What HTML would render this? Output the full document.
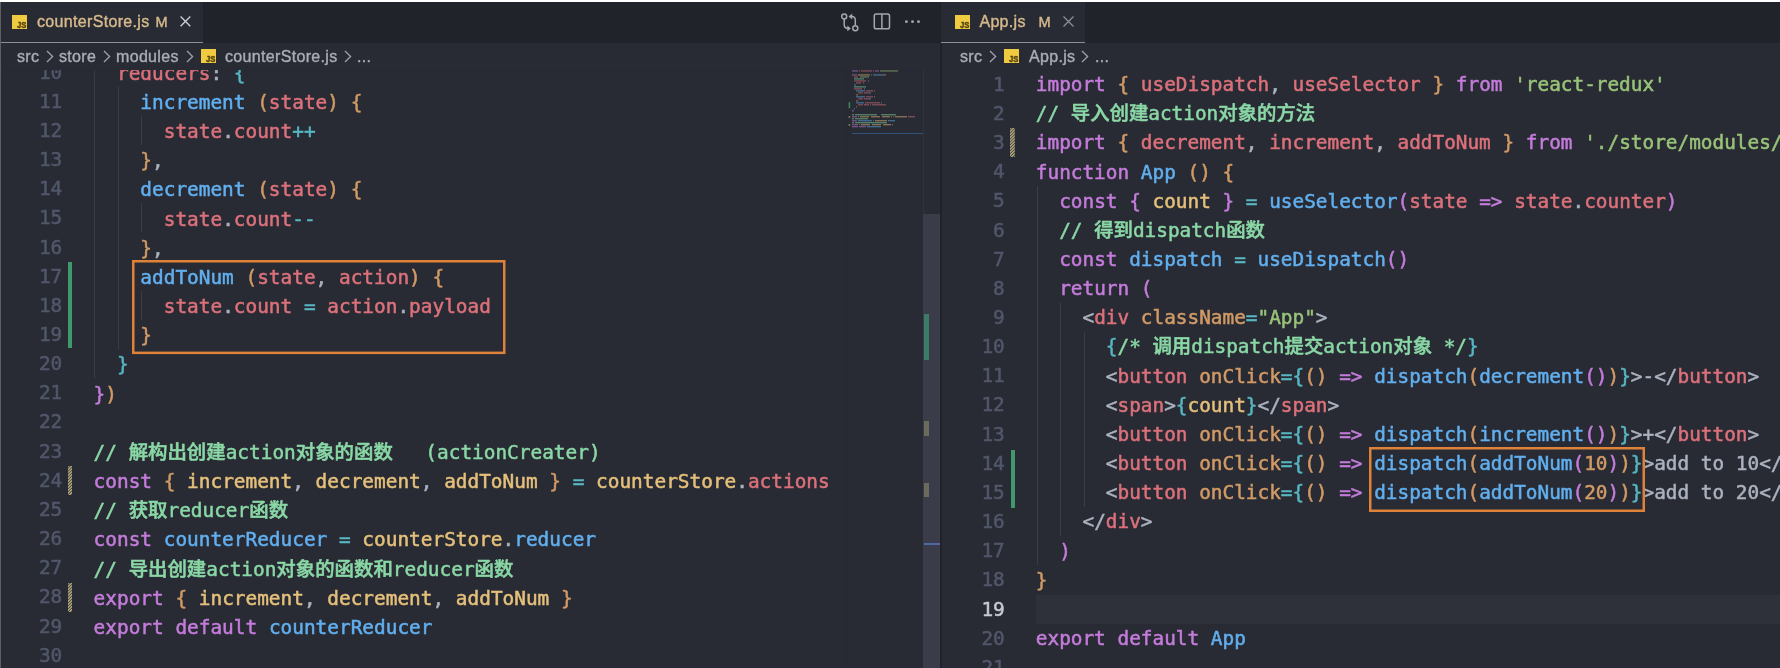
<!DOCTYPE html>
<html lang="zh"><head><meta charset="utf-8"><title>VS Code</title>
<style>
*{box-sizing:border-box}
html,body{margin:0;padding:0}
body{width:1780px;height:668px;overflow:hidden;background:#fff;position:relative;font-family:"Liberation Sans","Noto Sans CJK SC",sans-serif}
#app{position:absolute;left:0;top:2px;width:1780px;height:666px;background:#292b34;overflow:hidden;will-change:transform}
.abs{position:absolute}
.tabbar{position:absolute;top:0;height:41.2px;background:#21232b}
.tab{position:absolute;top:0;height:39.8px;background:#292b34}.tab:after{content:'';position:absolute;left:0;right:0;top:39.5px;height:1.7px;background:#8d8f95}
.ui{position:absolute;white-space:pre;font-size:16px;letter-spacing:.33px;line-height:20px;color:#a9acb5;-webkit-text-stroke:.4px currentColor}
.mod{color:#d7ba8c}
.ln,.cl{position:absolute;height:29.16px;line-height:29.16px;font-family:"DejaVu Sans Mono","Liberation Mono","Noto Sans CJK SC",monospace;font-size:19.4px;white-space:pre;-webkit-text-stroke:.5px currentColor}
.ln{text-align:right;color:#51576a}
.ln.cur{color:#c6c9d1}
.cl{color:#abb2bf;margin-top:1.3px}
#led .cl{font-size:19.41px}
#red .cl{font-size:19.385px;margin-top:.35px}
.k{color:#c47cdb}.f{color:#61afef}.v{color:#dc717b}.y{color:#e5c07b}.o{color:#d19a66}.c{color:#56b6c2}.s{color:#98c379}.g{color:#abb2bf}
.m{color:#8ad8a6;font-weight:500}
.sp{letter-spacing:-.85px}
.gd{position:absolute;width:1px;background:#3a3d48}
.box{position:absolute;overflow:visible}
.mm{position:absolute}
.hatch{position:absolute}
.gbar{position:absolute;width:4px;background:#40996a}
</style></head>
<body><div id="app">
<div class="tabbar" style="left:0;width:940px"></div>
<div class="tab" style="left:1px;width:201.9px"></div>
<svg class="abs" style="left:12px;top:12.8px" width="15" height="14.6" viewBox="0 0 15 14.6"><rect width="15" height="14.6" fill="#f0cb41"/><text x="5" y="13.2" font-family="Liberation Sans, sans-serif" font-weight="bold" font-size="9.2" textLength="9.4" lengthAdjust="spacingAndGlyphs" fill="#54450f" stroke="#54450f" stroke-width=".45">JS</text></svg>
<div class="ui mod" style="left:37px;top:10px">counterStore.js</div>
<div class="ui mod" style="left:155.6px;top:10px;font-size:14.6px">M</div>
<svg class="abs" style="left:179.4px;top:13.4px" width="13" height="13" viewBox="0 0 13 13"><path d="M1.6 1.6L11.3 11.3M11.3 1.6L1.6 11.3" stroke="#c9ccd3" stroke-width="1.4" fill="none"/></svg>
<svg class="abs" style="left:840px;top:10px" width="20" height="21" viewBox="0 0 20 21" fill="none" stroke="#a6a8af" stroke-width="1.5">
<circle cx="4.2" cy="4.5" r="2.5"/><circle cx="15.3" cy="16.3" r="2.5"/>
<path d="M4.2 7V12.6Q4.2 16.4 7.6 16.4H8"/>
<path d="M15.3 13.8V8.3Q15.3 4.5 11.9 4.5H11.5"/>
<path d="M7.3 13.5L10.9 16.4L7.3 19.3Z" fill="#a6a8af" stroke="none"/>
<path d="M12.2 1.6L8.6 4.5L12.2 7.4Z" fill="#a6a8af" stroke="none"/></svg>
<svg class="abs" style="left:873px;top:11px" width="18" height="17" viewBox="0 0 18 17" fill="none" stroke="#a6a8af" stroke-width="1.5">
<rect x="1.3" y="1.1" width="15.2" height="14.7" rx="1.8"/><path d="M8.9 1.1V15.8"/></svg>
<svg class="abs" style="left:904px;top:17px" width="18" height="5" viewBox="0 0 18 5" fill="#a6a8af"><circle cx="2.4" cy="2.7" r="1.4"/><circle cx="8.5" cy="2.7" r="1.4"/><circle cx="14.5" cy="2.7" r="1.4"/></svg>
<div class="ui" style="left:17px;top:45px">src</div>
<svg class="abs" style="left:46px;top:48px" width="8" height="13" viewBox="0 0 8 13"><path d="M1 1L6.6 6.5L1 12" stroke="#9fa3ae" stroke-width="1.3" fill="none"/></svg>
<div class="ui" style="left:59px;top:45px">store</div>
<svg class="abs" style="left:103px;top:48px" width="8" height="13" viewBox="0 0 8 13"><path d="M1 1L6.6 6.5L1 12" stroke="#9fa3ae" stroke-width="1.3" fill="none"/></svg>
<div class="ui" style="left:116px;top:45px">modules</div>
<svg class="abs" style="left:185.8px;top:48px" width="8" height="13" viewBox="0 0 8 13"><path d="M1 1L6.6 6.5L1 12" stroke="#9fa3ae" stroke-width="1.3" fill="none"/></svg>
<svg class="abs" style="left:201px;top:46.8px" width="15" height="14.6" viewBox="0 0 15 14.6"><rect width="15" height="14.6" fill="#f0cb41"/><text x="5" y="13.2" font-family="Liberation Sans, sans-serif" font-weight="bold" font-size="9.2" textLength="9.4" lengthAdjust="spacingAndGlyphs" fill="#54450f" stroke="#54450f" stroke-width=".45">JS</text></svg>
<div class="ui" style="left:225px;top:45px">counterStore.js</div>
<svg class="abs" style="left:344px;top:48px" width="8" height="13" viewBox="0 0 8 13"><path d="M1 1L6.6 6.5L1 12" stroke="#9fa3ae" stroke-width="1.3" fill="none"/></svg>
<div class="ui" style="left:357px;top:45px">...</div>
<div class="abs" id="led" style="left:0;top:68px;width:940px;height:598px;overflow:hidden">
<div class="gd" style="left:94px;top:-12.5px;height:320.8px"></div>
<div class="gd" style="left:117.5px;top:16.7px;height:262.4px"></div>
<div class="gd" style="left:141px;top:45.9px;height:29.2px"></div>
<div class="gd" style="left:141px;top:133.3px;height:29.2px"></div>
<div class="gd" style="left:141px;top:220.8px;height:29.2px"></div>
<div class="ln" style="top:-12.45px;left:0;width:62.3px">10</div>
<div class="cl" style="top:-12.45px;left:93.6px">  <span class="v">reducers</span><span class="g">:</span> <span class="c">{</span></div>
<div class="ln" style="top:16.71px;left:0;width:62.3px">11</div>
<div class="cl" style="top:16.71px;left:93.6px">    <span class="f">increment</span> <span class="o">(</span><span class="v">state</span><span class="o">)</span> <span class="o">{</span></div>
<div class="ln" style="top:45.87px;left:0;width:62.3px">12</div>
<div class="cl" style="top:45.87px;left:93.6px">      <span class="v">state</span><span class="g">.</span><span class="v">count</span><span class="c">++</span></div>
<div class="ln" style="top:75.03px;left:0;width:62.3px">13</div>
<div class="cl" style="top:75.03px;left:93.6px">    <span class="o">}</span><span class="g">,</span></div>
<div class="ln" style="top:104.19px;left:0;width:62.3px">14</div>
<div class="cl" style="top:104.19px;left:93.6px">    <span class="f">decrement</span> <span class="o">(</span><span class="v">state</span><span class="o">)</span> <span class="o">{</span></div>
<div class="ln" style="top:133.35px;left:0;width:62.3px">15</div>
<div class="cl" style="top:133.35px;left:93.6px">      <span class="v">state</span><span class="g">.</span><span class="v">count</span><span class="c">--</span></div>
<div class="ln" style="top:162.51px;left:0;width:62.3px">16</div>
<div class="cl" style="top:162.51px;left:93.6px">    <span class="o">}</span><span class="g">,</span></div>
<div class="ln" style="top:191.67px;left:0;width:62.3px">17</div>
<div class="cl" style="top:191.67px;left:93.6px">    <span class="f">addToNum</span> <span class="o">(</span><span class="v">state</span><span class="g">,</span> <span class="v">action</span><span class="o">)</span> <span class="o">{</span></div>
<div class="ln" style="top:220.83px;left:0;width:62.3px">18</div>
<div class="cl" style="top:220.83px;left:93.6px">      <span class="v">state</span><span class="g">.</span><span class="v">count</span> <span class="c">=</span> <span class="v">action</span><span class="g">.</span><span class="v">payload</span></div>
<div class="ln" style="top:249.99px;left:0;width:62.3px">19</div>
<div class="cl" style="top:249.99px;left:93.6px">    <span class="o">}</span></div>
<div class="ln" style="top:279.15px;left:0;width:62.3px">20</div>
<div class="cl" style="top:279.15px;left:93.6px">  <span class="c">}</span></div>
<div class="ln" style="top:308.31px;left:0;width:62.3px">21</div>
<div class="cl" style="top:308.31px;left:93.6px"><span class="k">}</span><span class="o">)</span></div>
<div class="ln" style="top:337.47px;left:0;width:62.3px">22</div>
<div class="ln" style="top:366.63px;left:0;width:62.3px">23</div>
<div class="cl" style="top:366.63px;left:93.6px"><span class="m">// 解构出创建action对象的函数</span><span class="sp">   </span><span class="m">(actionCreater)</span></div>
<div class="ln" style="top:395.79px;left:0;width:62.3px">24</div>
<div class="cl" style="top:395.79px;left:93.6px"><span class="k">const</span> <span class="o">{</span> <span class="y">increment</span><span class="g">,</span> <span class="y">decrement</span><span class="g">,</span> <span class="y">addToNum</span> <span class="o">}</span> <span class="c">=</span> <span class="y">counterStore</span><span class="g">.</span><span class="v">actions</span></div>
<div class="ln" style="top:424.95px;left:0;width:62.3px">25</div>
<div class="cl" style="top:424.95px;left:93.6px"><span class="m">// 获取reducer函数</span></div>
<div class="ln" style="top:454.11px;left:0;width:62.3px">26</div>
<div class="cl" style="top:454.11px;left:93.6px"><span class="k">const</span> <span class="f">counterReducer</span> <span class="c">=</span> <span class="y">counterStore</span><span class="g">.</span><span class="f">reducer</span></div>
<div class="ln" style="top:483.27px;left:0;width:62.3px">27</div>
<div class="cl" style="top:483.27px;left:93.6px"><span class="m">// 导出创建action对象的函数和reducer函数</span></div>
<div class="ln" style="top:512.43px;left:0;width:62.3px">28</div>
<div class="cl" style="top:512.43px;left:93.6px"><span class="k">export</span> <span class="o">{</span> <span class="y">increment</span><span class="g">,</span> <span class="y">decrement</span><span class="g">,</span> <span class="y">addToNum</span> <span class="o">}</span></div>
<div class="ln" style="top:541.59px;left:0;width:62.3px">29</div>
<div class="cl" style="top:541.59px;left:93.6px"><span class="k">export</span> <span class="k">default</span> <span class="f">counterReducer</span></div>
<div class="ln" style="top:570.75px;left:0;width:62.3px">30</div>
<div class="gbar" style="left:68px;top:191.5px;height:86.3px"></div>
<svg class="hatch" style="left:67.7px;top:396.3px" width="4.8" height="29.2"><defs><pattern id="h1" width="2.1" height="2.1" patternUnits="userSpaceOnUse" patternTransform="rotate(-45)"><rect width="2.1" height="2.1" fill="#403d2e"/><rect width="2.1" height="1.05" fill="#cfc79b"/></pattern></defs><rect width="4.8" height="29.2" rx="1" fill="url(#h1)"/></svg>
<svg class="hatch" style="left:67.7px;top:512.9px" width="4.8" height="29.2"><defs><pattern id="h2" width="2.1" height="2.1" patternUnits="userSpaceOnUse" patternTransform="rotate(-45)"><rect width="2.1" height="2.1" fill="#403d2e"/><rect width="2.1" height="1.05" fill="#cfc79b"/></pattern></defs><rect width="4.8" height="29.2" rx="1" fill="url(#h2)"/></svg>
<svg class="box" style="left:131.70px;top:190.20px" width="373.50" height="94.10"><rect x="1.25" y="1.25" width="371.00" height="91.60" fill="none" stroke="#dd8238" stroke-width="2.5"/></svg>
</div>
<div class="abs" style="left:0;top:68px;width:923px;height:3px;background:linear-gradient(rgba(20,22,28,.08),rgba(20,22,28,0))"></div>
<div class="abs" style="left:843px;top:68px;width:6px;height:598px;background:linear-gradient(90deg,rgba(20,22,28,0),rgba(20,22,28,.07))"></div>
<svg class="mm" width="76" height="70" viewBox="0 0 76 70" style="left:848px;top:68px"><rect x="4.0" y="0.30" width="6.0" height="1.3" fill="#c47cdb" opacity=".5"/><rect x="11.0" y="0.30" width="1.0" height="1.3" fill="#d19a66" opacity=".5"/><rect x="13.0" y="0.30" width="11.0" height="1.3" fill="#dc717b" opacity=".5"/><rect x="25.0" y="0.30" width="1.0" height="1.3" fill="#d19a66" opacity=".5"/><rect x="27.0" y="0.30" width="4.0" height="1.3" fill="#c47cdb" opacity=".5"/><rect x="32.0" y="0.30" width="18.0" height="1.3" fill="#98c379" opacity=".5"/><rect x="4.0" y="4.28" width="5.0" height="1.3" fill="#c47cdb" opacity=".5"/><rect x="10.0" y="4.28" width="12.0" height="1.3" fill="#e5c07b" opacity=".5"/><rect x="23.0" y="4.28" width="1.0" height="1.3" fill="#56b6c2" opacity=".5"/><rect x="25.0" y="4.28" width="11.0" height="1.3" fill="#61afef" opacity=".5"/><rect x="36.0" y="4.28" width="2.0" height="1.3" fill="#d19a66" opacity=".5"/><rect x="6.0" y="6.27" width="4.0" height="1.3" fill="#dc717b" opacity=".5"/><rect x="12.0" y="6.27" width="9.0" height="1.3" fill="#98c379" opacity=".5"/><rect x="6.0" y="8.26" width="10.0" height="1.3" fill="#8ad8a6" opacity=".5"/><rect x="6.0" y="10.25" width="12.0" height="1.3" fill="#dc717b" opacity=".5"/><rect x="20.0" y="10.25" width="1.0" height="1.3" fill="#56b6c2" opacity=".5"/><rect x="8.0" y="12.24" width="5.0" height="1.3" fill="#dc717b" opacity=".5"/><rect x="15.0" y="12.24" width="1.0" height="1.3" fill="#d19a66" opacity=".5"/><rect x="6.0" y="14.23" width="2.0" height="1.3" fill="#56b6c2" opacity=".5"/><rect x="6.0" y="16.22" width="12.0" height="1.3" fill="#8ad8a6" opacity=".5"/><rect x="6.0" y="18.21" width="8.0" height="1.3" fill="#dc717b" opacity=".5"/><rect x="16.0" y="18.21" width="1.0" height="1.3" fill="#56b6c2" opacity=".5"/><rect x="8.0" y="20.20" width="9.0" height="1.3" fill="#61afef" opacity=".5"/><rect x="18.0" y="20.20" width="7.0" height="1.3" fill="#dc717b" opacity=".5"/><rect x="26.0" y="20.20" width="1.0" height="1.3" fill="#d19a66" opacity=".5"/><rect x="10.0" y="22.19" width="5.0" height="1.3" fill="#dc717b" opacity=".5"/><rect x="16.0" y="22.19" width="5.0" height="1.3" fill="#dc717b" opacity=".5"/><rect x="21.0" y="22.19" width="2.0" height="1.3" fill="#56b6c2" opacity=".5"/><rect x="8.0" y="24.18" width="2.0" height="1.3" fill="#d19a66" opacity=".5"/><rect x="8.0" y="26.17" width="9.0" height="1.3" fill="#61afef" opacity=".5"/><rect x="18.0" y="26.17" width="7.0" height="1.3" fill="#dc717b" opacity=".5"/><rect x="26.0" y="26.17" width="1.0" height="1.3" fill="#d19a66" opacity=".5"/><rect x="10.0" y="28.16" width="5.0" height="1.3" fill="#dc717b" opacity=".5"/><rect x="16.0" y="28.16" width="5.0" height="1.3" fill="#dc717b" opacity=".5"/><rect x="21.0" y="28.16" width="2.0" height="1.3" fill="#56b6c2" opacity=".5"/><rect x="8.0" y="30.15" width="2.0" height="1.3" fill="#d19a66" opacity=".5"/><rect x="8.0" y="32.14" width="8.0" height="1.3" fill="#61afef" opacity=".5"/><rect x="17.0" y="32.14" width="15.0" height="1.3" fill="#dc717b" opacity=".5"/><rect x="33.0" y="32.14" width="1.0" height="1.3" fill="#d19a66" opacity=".5"/><rect x="10.0" y="34.13" width="5.0" height="1.3" fill="#dc717b" opacity=".5"/><rect x="16.0" y="34.13" width="5.0" height="1.3" fill="#dc717b" opacity=".5"/><rect x="22.0" y="34.13" width="1.0" height="1.3" fill="#56b6c2" opacity=".5"/><rect x="24.0" y="34.13" width="14.0" height="1.3" fill="#dc717b" opacity=".5"/><rect x="8.0" y="36.12" width="1.0" height="1.3" fill="#d19a66" opacity=".5"/><rect x="6.0" y="38.11" width="1.0" height="1.3" fill="#56b6c2" opacity=".5"/><rect x="4.0" y="40.10" width="2.0" height="1.3" fill="#c47cdb" opacity=".5"/><rect x="4.0" y="44.08" width="2.0" height="1.3" fill="#8ad8a6" opacity=".5"/><rect x="7.0" y="44.08" width="22.0" height="1.3" fill="#8ad8a6" opacity=".5"/><rect x="33.0" y="44.08" width="15.0" height="1.3" fill="#8ad8a6" opacity=".5"/><rect x="4.0" y="46.07" width="5.0" height="1.3" fill="#c47cdb" opacity=".5"/><rect x="10.0" y="46.07" width="1.0" height="1.3" fill="#d19a66" opacity=".5"/><rect x="12.0" y="46.07" width="9.0" height="1.3" fill="#e5c07b" opacity=".5"/><rect x="23.0" y="46.07" width="9.0" height="1.3" fill="#e5c07b" opacity=".5"/><rect x="34.0" y="46.07" width="8.0" height="1.3" fill="#e5c07b" opacity=".5"/><rect x="43.0" y="46.07" width="1.0" height="1.3" fill="#d19a66" opacity=".5"/><rect x="45.0" y="46.07" width="1.0" height="1.3" fill="#56b6c2" opacity=".5"/><rect x="47.0" y="46.07" width="12.0" height="1.3" fill="#e5c07b" opacity=".5"/><rect x="60.0" y="46.07" width="7.0" height="1.3" fill="#dc717b" opacity=".5"/><rect x="4.0" y="48.06" width="2.0" height="1.3" fill="#8ad8a6" opacity=".5"/><rect x="7.0" y="48.06" width="13.0" height="1.3" fill="#8ad8a6" opacity=".5"/><rect x="4.0" y="50.05" width="5.0" height="1.3" fill="#c47cdb" opacity=".5"/><rect x="10.0" y="50.05" width="14.0" height="1.3" fill="#61afef" opacity=".5"/><rect x="25.0" y="50.05" width="1.0" height="1.3" fill="#56b6c2" opacity=".5"/><rect x="27.0" y="50.05" width="12.0" height="1.3" fill="#e5c07b" opacity=".5"/><rect x="40.0" y="50.05" width="7.0" height="1.3" fill="#61afef" opacity=".5"/><rect x="4.0" y="52.04" width="2.0" height="1.3" fill="#8ad8a6" opacity=".5"/><rect x="7.0" y="52.04" width="32.0" height="1.3" fill="#8ad8a6" opacity=".5"/><rect x="4.0" y="54.03" width="6.0" height="1.3" fill="#c47cdb" opacity=".5"/><rect x="11.0" y="54.03" width="1.0" height="1.3" fill="#d19a66" opacity=".5"/><rect x="13.0" y="54.03" width="9.0" height="1.3" fill="#e5c07b" opacity=".5"/><rect x="24.0" y="54.03" width="9.0" height="1.3" fill="#e5c07b" opacity=".5"/><rect x="35.0" y="54.03" width="8.0" height="1.3" fill="#e5c07b" opacity=".5"/><rect x="44.0" y="54.03" width="1.0" height="1.3" fill="#d19a66" opacity=".5"/><rect x="4.0" y="56.02" width="6.0" height="1.3" fill="#c47cdb" opacity=".5"/><rect x="11.0" y="56.02" width="7.0" height="1.3" fill="#c47cdb" opacity=".5"/><rect x="19.0" y="56.02" width="14.0" height="1.3" fill="#61afef" opacity=".5"/><rect x="0.6" y="32.14" width="1.6" height="6" fill="#3f9a6a" opacity=".8"/><rect x="0.6" y="46.07" width="1.6" height="1.8" fill="#9a9068" opacity=".8"/><rect x="0.6" y="54.03" width="1.6" height="1.8" fill="#9a9068" opacity=".8"/></svg>
<div class="abs" style="left:852px;top:130.5px;width:71px;height:1.5px;background:#31527a"></div>
<div class="abs" style="left:923px;top:68px;width:1px;height:598px;background:#30323c"></div>
<div class="abs" style="left:923.3px;top:212px;width:16.7px;height:454px;background:#3a3c49"></div>
<div class="abs" style="left:924px;top:312px;width:5px;height:45.5px;background:#3d7a68"></div>
<div class="abs" style="left:924px;top:419px;width:5px;height:15px;background:#6b6a5c"></div>
<div class="abs" style="left:924px;top:481px;width:5px;height:14px;background:#6b6a5c"></div>
<div class="abs" style="left:924px;top:541.2px;width:16px;height:2.1px;background:#4f67a2"></div>
<div class="abs" style="left:0;top:0;width:1px;height:666px;background:#5d5f67"></div>
<div class="abs" style="left:940px;top:0;width:1.8px;height:666px;background:#202229"></div>
<div class="tabbar" style="left:941.5px;width:838.5px"></div>
<div class="tab" style="left:941px;width:143.5px"></div>
<svg class="abs" style="left:955px;top:12.8px" width="15" height="14.6" viewBox="0 0 15 14.6"><rect width="15" height="14.6" fill="#f0cb41"/><text x="5" y="13.2" font-family="Liberation Sans, sans-serif" font-weight="bold" font-size="9.2" textLength="9.4" lengthAdjust="spacingAndGlyphs" fill="#54450f" stroke="#54450f" stroke-width=".45">JS</text></svg>
<div class="ui mod" style="left:979.4px;top:10px">App.js</div>
<div class="ui mod" style="left:1038.6px;top:10px;font-size:14.6px">M</div>
<svg class="abs" style="left:1062px;top:13px" width="13" height="13" viewBox="0 0 13 13"><path d="M1.5 1.5L11.5 11.5M11.5 1.5L1.5 11.5" stroke="#8e919b" stroke-width="1.2" fill="none"/></svg>
<div class="ui" style="left:960px;top:45px">src</div>
<svg class="abs" style="left:989px;top:48px" width="8" height="13" viewBox="0 0 8 13"><path d="M1 1L6.6 6.5L1 12" stroke="#9fa3ae" stroke-width="1.3" fill="none"/></svg>
<svg class="abs" style="left:1004px;top:46.8px" width="15" height="14.6" viewBox="0 0 15 14.6"><rect width="15" height="14.6" fill="#f0cb41"/><text x="5" y="13.2" font-family="Liberation Sans, sans-serif" font-weight="bold" font-size="9.2" textLength="9.4" lengthAdjust="spacingAndGlyphs" fill="#54450f" stroke="#54450f" stroke-width=".45">JS</text></svg>
<div class="ui" style="left:1029px;top:45px">App.js</div>
<svg class="abs" style="left:1081px;top:48px" width="8" height="13" viewBox="0 0 8 13"><path d="M1 1L6.6 6.5L1 12" stroke="#9fa3ae" stroke-width="1.3" fill="none"/></svg>
<div class="ui" style="left:1095px;top:45px">...</div>
<div class="abs" id="red" style="left:942px;top:68px;width:838px;height:598px;overflow:hidden">
<div class="abs" style="left:94px;top:524.8px;width:800px;height:29.2px;background:#2e303a"></div>
<div class="gd" style="left:95px;top:116.3px;height:379.1px"></div>
<div class="gd" style="left:118.29999999999995px;top:233.0px;height:233.3px"></div>
<div class="gd" style="left:141.5999999999999px;top:262.1px;height:175.0px"></div>
<div class="ln" style="top:-0.29px;left:0;width:62.8px">1</div>
<div class="cl" style="top:-0.29px;left:93.8px"><span class="k">import</span> <span class="o">{</span> <span class="v">useDispatch</span><span class="g">,</span> <span class="v">useSelector</span> <span class="o">}</span> <span class="k">from</span> <span class="s">&#x27;react-redux&#x27;</span></div>
<div class="ln" style="top:28.87px;left:0;width:62.8px">2</div>
<div class="cl" style="top:28.87px;left:93.8px"><span class="m">// 导入创建action对象的方法</span></div>
<div class="ln" style="top:58.03px;left:0;width:62.8px">3</div>
<div class="cl" style="top:58.03px;left:93.8px"><span class="k">import</span> <span class="o">{</span> <span class="v">decrement</span><span class="g">,</span> <span class="v">increment</span><span class="g">,</span> <span class="v">addToNum</span> <span class="o">}</span> <span class="k">from</span> <span class="s">&#x27;./store/modules/counterStore&#x27;</span></div>
<div class="ln" style="top:87.19px;left:0;width:62.8px">4</div>
<div class="cl" style="top:87.19px;left:93.8px"><span class="k">function</span> <span class="f">App</span> <span class="o">()</span> <span class="o">{</span></div>
<div class="ln" style="top:116.35px;left:0;width:62.8px">5</div>
<div class="cl" style="top:116.35px;left:93.8px">  <span class="k">const</span> <span class="k">{</span> <span class="y">count</span> <span class="k">}</span> <span class="c">=</span> <span class="f">useSelector</span><span class="k">(</span><span class="v">state</span> <span class="k">=&gt;</span> <span class="v">state</span><span class="g">.</span><span class="v">counter</span><span class="k">)</span></div>
<div class="ln" style="top:145.51px;left:0;width:62.8px">6</div>
<div class="cl" style="top:145.51px;left:93.8px">  <span class="m">// 得到dispatch函数</span></div>
<div class="ln" style="top:174.67px;left:0;width:62.8px">7</div>
<div class="cl" style="top:174.67px;left:93.8px">  <span class="k">const</span> <span class="f">dispatch</span> <span class="c">=</span> <span class="f">useDispatch</span><span class="k">()</span></div>
<div class="ln" style="top:203.83px;left:0;width:62.8px">8</div>
<div class="cl" style="top:203.83px;left:93.8px">  <span class="k">return</span> <span class="k">(</span></div>
<div class="ln" style="top:232.99px;left:0;width:62.8px">9</div>
<div class="cl" style="top:232.99px;left:93.8px">    <span class="g">&lt;</span><span class="v">div</span> <span class="o">className</span><span class="c">=</span><span class="s">&quot;App&quot;</span><span class="g">&gt;</span></div>
<div class="ln" style="top:262.15px;left:0;width:62.8px">10</div>
<div class="cl" style="top:262.15px;left:93.8px">      <span class="c">{</span><span class="m">/* 调用dispatch提交action对象 */</span><span class="c">}</span></div>
<div class="ln" style="top:291.31px;left:0;width:62.8px">11</div>
<div class="cl" style="top:291.31px;left:93.8px">      <span class="g">&lt;</span><span class="v">button</span> <span class="o">onClick</span><span class="c">=</span><span class="c">{</span><span class="o">()</span> <span class="k">=&gt;</span> <span class="f">dispatch</span><span class="o">(</span><span class="f">decrement</span><span class="k">()</span><span class="o">)</span><span class="c">}</span><span class="g">&gt;-&lt;/</span><span class="v">button</span><span class="g">&gt;</span></div>
<div class="ln" style="top:320.47px;left:0;width:62.8px">12</div>
<div class="cl" style="top:320.47px;left:93.8px">      <span class="g">&lt;</span><span class="v">span</span><span class="g">&gt;</span><span class="c">{</span><span class="y">count</span><span class="c">}</span><span class="g">&lt;/</span><span class="v">span</span><span class="g">&gt;</span></div>
<div class="ln" style="top:349.63px;left:0;width:62.8px">13</div>
<div class="cl" style="top:349.63px;left:93.8px">      <span class="g">&lt;</span><span class="v">button</span> <span class="o">onClick</span><span class="c">=</span><span class="c">{</span><span class="o">()</span> <span class="k">=&gt;</span> <span class="f">dispatch</span><span class="o">(</span><span class="f">increment</span><span class="k">()</span><span class="o">)</span><span class="c">}</span><span class="g">&gt;+&lt;/</span><span class="v">button</span><span class="g">&gt;</span></div>
<div class="ln" style="top:378.79px;left:0;width:62.8px">14</div>
<div class="cl" style="top:378.79px;left:93.8px">      <span class="g">&lt;</span><span class="v">button</span> <span class="o">onClick</span><span class="c">=</span><span class="c">{</span><span class="o">()</span> <span class="k">=&gt;</span> <span class="f">dispatch</span><span class="o">(</span><span class="f">addToNum</span><span class="k">(</span><span class="o">10</span><span class="k">)</span><span class="o">)</span><span class="c">}</span><span class="g">&gt;add to 10&lt;/</span></div>
<div class="ln" style="top:407.95px;left:0;width:62.8px">15</div>
<div class="cl" style="top:407.95px;left:93.8px">      <span class="g">&lt;</span><span class="v">button</span> <span class="o">onClick</span><span class="c">=</span><span class="c">{</span><span class="o">()</span> <span class="k">=&gt;</span> <span class="f">dispatch</span><span class="o">(</span><span class="f">addToNum</span><span class="k">(</span><span class="o">20</span><span class="k">)</span><span class="o">)</span><span class="c">}</span><span class="g">&gt;add to 20&lt;/</span></div>
<div class="ln" style="top:437.11px;left:0;width:62.8px">16</div>
<div class="cl" style="top:437.11px;left:93.8px">    <span class="g">&lt;/</span><span class="v">div</span><span class="g">&gt;</span></div>
<div class="ln" style="top:466.27px;left:0;width:62.8px">17</div>
<div class="cl" style="top:466.27px;left:93.8px">  <span class="k">)</span></div>
<div class="ln" style="top:495.43px;left:0;width:62.8px">18</div>
<div class="cl" style="top:495.43px;left:93.8px"><span class="o">}</span></div>
<div class="ln cur" style="top:524.59px;left:0;width:62.8px">19</div>
<div class="ln" style="top:553.75px;left:0;width:62.8px">20</div>
<div class="cl" style="top:553.75px;left:93.8px"><span class="k">export</span> <span class="k">default</span> <span class="f">App</span></div>
<div class="ln" style="top:582.91px;left:0;width:62.8px">21</div>
<svg class="hatch" style="left:68.3px;top:57.8px" width="4.8" height="29.2"><defs><pattern id="h3" width="2.1" height="2.1" patternUnits="userSpaceOnUse" patternTransform="rotate(-45)"><rect width="2.1" height="2.1" fill="#403d2e"/><rect width="2.1" height="1.05" fill="#cfc79b"/></pattern></defs><rect width="4.8" height="29.2" rx="1" fill="url(#h3)"/></svg>
<div class="gbar" style="left:69px;top:380.0px;height:57.8px"></div>
<svg class="box" style="left:427.30px;top:376.80px" width="276.00" height="65.00"><rect x="1.25" y="1.25" width="273.50" height="62.50" fill="none" stroke="#dd8238" stroke-width="2.5"/></svg>
</div>
</div></body></html>
